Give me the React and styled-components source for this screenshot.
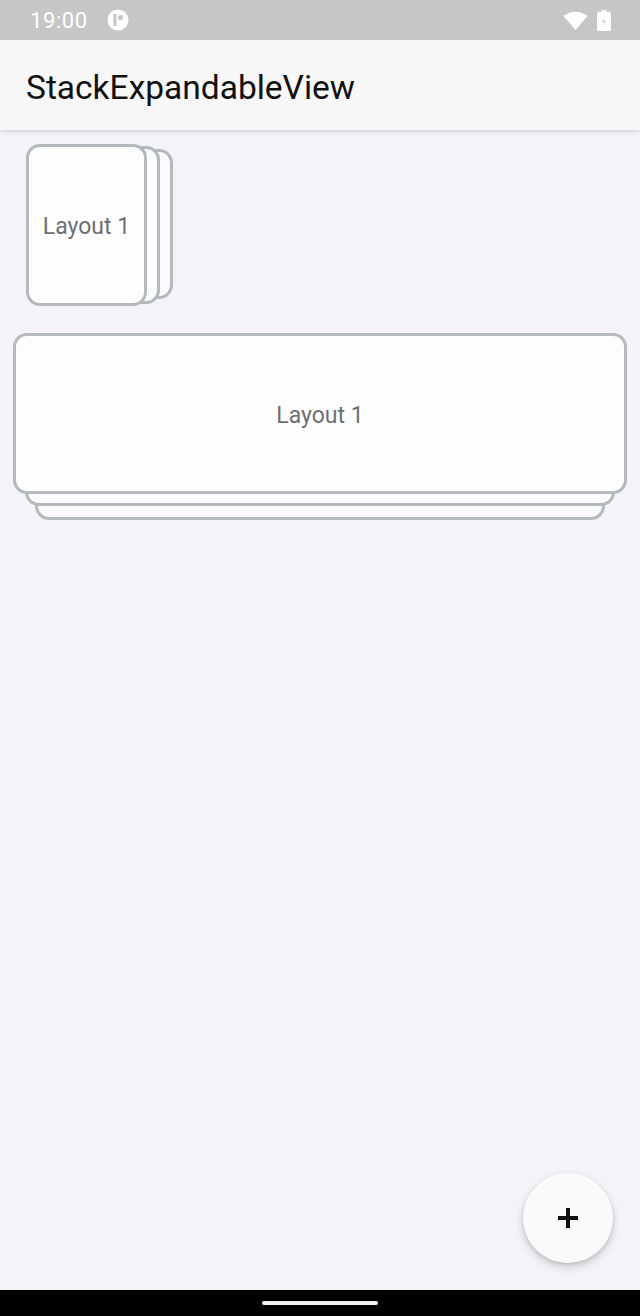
import React from "react";
import styled, { createGlobalStyle } from "styled-components";

const GlobalStyle = createGlobalStyle`
  html, body {
    margin: 0;
    padding: 0;
    background: #f3f3f8;
    font-family: Roboto, "Noto Sans", sans-serif;
  }
`

const Screen = styled.div`
  width: 640px;
  height: 1316px;
  display: flex;
  flex-direction: column;
  background: #f3f3f8;
  position: relative;
  overflow: hidden;
`

const StatusBar = styled.div`
  height: 40px;
  background: #c6c6c6;
  display: flex;
  align-items: center;
  padding: 0 29px 0 30px;
  color: #fff;
  font-size: 22px;
`
const Time = styled.span`
  letter-spacing: 0.6px;
`
const StatusIcons = styled.div`
  margin-left: auto;
  display: flex;
  align-items: center;
  gap: 9px;
`

const AppBar = styled.div`
  height: 90px;
  background: #f7f7f7;
  display: flex;
  align-items: center;
  padding-left: 26px;
  box-shadow: 0 2px 4px rgba(0, 0, 0, 0.12);
  z-index: 2;
`
const Title = styled.h1`
  margin: 0;
  font-size: 33.5px;
  font-weight: 400;
  color: #111;
  padding-top: 4px;
`

const Content = styled.div`
  flex: 1;
  display: flex;
  flex-direction: column;
  align-items: flex-start;
`

const Stack = styled.div`
  position: relative;
  margin: ${(p) => p.margin};
`

const Card = styled.div`
  box-sizing: border-box;
  width: ${(p) => p.w}px;
  height: ${(p) => p.h}px;
  border: 3px solid #b3b9bd;
  border-radius: 14px;
  background: #fdfdfe;
  display: flex;
  align-items: center;
  justify-content: center;
  position: relative;
  z-index: 3;
  color: #6f6f6f;
  font-size: 23px;
  padding-top: 3px;
`

const BackCard = styled.div`
  position: absolute;
  box-sizing: border-box;
  border: 3px solid #b3b9bd;
  border-radius: 14px;
  background: #fbfbfd;
  z-index: ${(p) => p.z};
  top: ${(p) => p.top}px;
  bottom: ${(p) => p.bottom}px;
  left: ${(p) => p.left}px;
  right: ${(p) => p.right}px;
`

const Fab = styled.button`
  position: absolute;
  right: 27px;
  bottom: 53px;
  width: 90px;
  height: 90px;
  border-radius: 50%;
  border: none;
  background: #fafafa;
  box-shadow: 0 4px 8px rgba(0, 0, 0, 0.18), 0 1px 3px rgba(0, 0, 0, 0.1);
  display: flex;
  align-items: center;
  justify-content: center;
`

const NavBar = styled.div`
  height: 26px;
  background: #000;
  display: flex;
  align-items: center;
  justify-content: center;
`
const HomePill = styled.div`
  width: 116px;
  height: 4px;
  border-radius: 2px;
  background: #f0f0f0;
`

export default function App() {
  return (
    <Screen>
      <GlobalStyle />
      <StatusBar>
        <Time>19:00</Time>
        <svg width="22" height="22" viewBox="0 0 22 22" style={{ marginLeft: 19 }}>
          <circle cx="11" cy="11" r="10.5" fill="#fff" />
          <path d="M8 5 v12" stroke="#c6c6c6" strokeWidth="3" />
          <circle cx="13.5" cy="8.5" r="2.5" fill="#c6c6c6" />
        </svg>
        <StatusIcons>
          <svg width="25" height="19" viewBox="0 0 25 19">
            <path d="M0.5 5 Q12.5 -3.5 24.5 5 L12.5 19 Z" fill="#fff" />
          </svg>
          <svg width="14" height="21" viewBox="0 0 14 21">
            <rect x="4.5" y="0" width="5" height="3" fill="#fff" />
            <rect x="0" y="2" width="14" height="19" rx="1.5" fill="#fff" />
            <path d="M8 6 L5 12 H7.5 L6 17 L9 11 H6.5 Z" fill="#c6c6c6" />
          </svg>
        </StatusIcons>
      </StatusBar>
      <AppBar>
        <Title>StackExpandableView</Title>
      </AppBar>
      <Content>
        <Stack margin="14px 0 0 26px">
          <BackCard z={1} top={5} bottom={7} left={26} right={-26} />
          <BackCard z={2} top={2} bottom={2} left={13} right={-13} />
          <Card w={121} h={162}>Layout 1</Card>
        </Stack>
        <Stack margin="27px 0 0 13px">
          <BackCard z={1} top={20} bottom={-26} left={22} right={22} />
          <BackCard z={2} top={10} bottom={-12} left={12} right={12} />
          <Card w={614} h={161}>Layout 1</Card>
        </Stack>
      </Content>
      <Fab>
        <svg width="22" height="22" viewBox="0 0 22 22">
          <path d="M11 1 V21 M1 11 H21" stroke="#111" strokeWidth="4" />
        </svg>
      </Fab>
      <NavBar>
        <HomePill />
      </NavBar>
    </Screen>
  );
}
